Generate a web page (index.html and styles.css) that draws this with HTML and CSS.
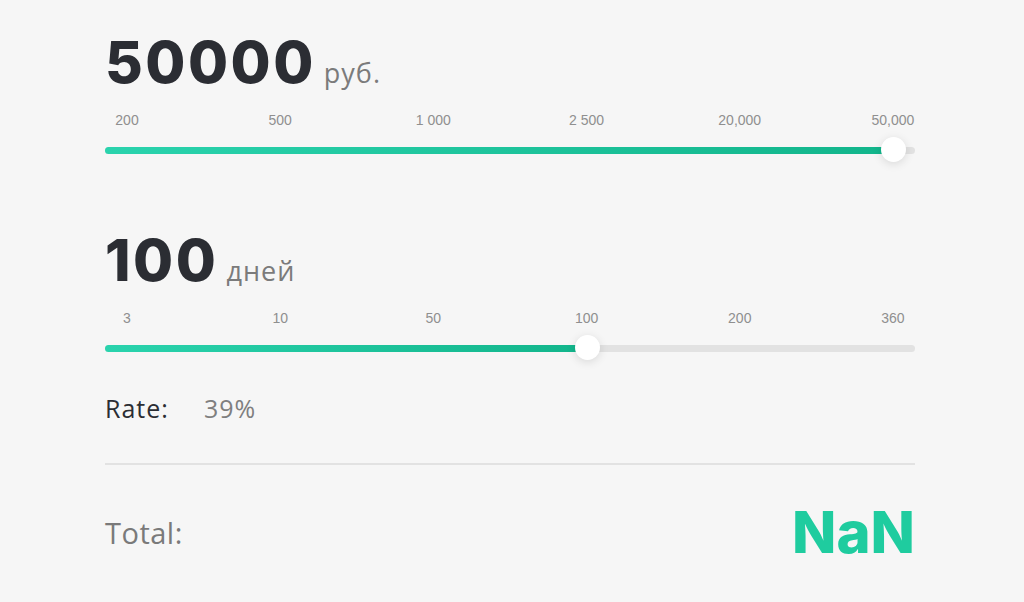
FILE: index.html
```html
<!DOCTYPE html>
<html lang="ru">
<head>
  <meta charset="UTF-8">
  <meta name="viewport" content="width=device-width, initial-scale=1.0">
  <title>Calculator</title>
  <link rel="stylesheet" href="styles.css">
</head>
<body>
  <div class="calc">
    <div class="field">
      <div class="value"><span class="num">50000</span> <span class="unit">руб.</span></div>
      <div class="ticks">
        <span>200</span><span>500</span><span>1 000</span><span>2 500</span><span>20,000</span><span>50,000</span>
      </div>
      <div class="slider">
        <div class="track">
          <div class="fill" style="width: 97.3%;"></div>
        </div>
        <div class="thumb" style="left: 97.3%;"></div>
      </div>
    </div>

    <div class="field second">
      <div class="value"><span class="num">100</span> <span class="unit">дней</span></div>
      <div class="ticks">
        <span>3</span><span>10</span><span>50</span><span>100</span><span>200</span><span>360</span>
      </div>
      <div class="slider">
        <div class="track">
          <div class="fill" style="width: 59.5%;"></div>
        </div>
        <div class="thumb" style="left: 59.5%;"></div>
      </div>
    </div>

    <div class="rate">
      <span class="rate-label">Rate:</span>
      <span class="rate-value">39%</span>
    </div>

    <div class="total">
      <span class="total-label">Total:</span>
      <span class="total-value">NaN</span>
    </div>
  </div>
</body>
</html>
```

FILE: styles.css
```css
body {
  margin: 0;
  background-color: #f6f6f6;
  font-family: "Open Sans", "Lato", sans-serif;
  color: #2b2d33;
}
.calc {
  width: 810px;
  margin: 0 0 0 105px;
  padding-top: 31px;
}
.value {
  display: flex;
  align-items: baseline;
  height: 62px;
}
.num {
  font-family: "Inter", "Lato", sans-serif;
  font-size: 58px;
  font-weight: 800;
  line-height: 62px;
  letter-spacing: 2.5px;
  color: #2b2d33;
}
.unit {
  margin-left: 8px;
  font-size: 27px;
  letter-spacing: 1px;
  color: #7b7b7b;
}
.ticks {
  display: flex;
  justify-content: space-between;
  margin-top: 19px;
  font-family: "Liberation Sans", Arial, sans-serif;
  font-size: 14px;
  color: #8f8f8f;
}
.ticks span {
  width: 44px;
  text-align: center;
}
.slider {
  position: relative;
  margin-top: 9px;
  height: 26px;
}
.track {
  position: absolute;
  left: 0;
  right: 0;
  top: 10px;
  height: 7px;
  border-radius: 4px;
  background-color: #e2e2e2;
}
.fill {
  height: 100%;
  border-radius: 4px;
  background: linear-gradient(to right, #2ad3ad, #12b58b);
}
.thumb {
  position: absolute;
  top: 0;
  width: 25px;
  height: 25px;
  margin-left: -12px;
  border-radius: 50%;
  background-color: #fff;
  box-shadow: 0 2px 10px rgba(0, 0, 0, 0.12);
}
.second {
  margin-top: 66px;
}
.rate {
  display: flex;
  align-items: baseline;
  margin-top: 30px;
  font-size: 25px;
  letter-spacing: 1px;
  padding-bottom: 38px;
  border-bottom: 2px solid #e2e2e2;
}
.rate-label {
  width: 99px;
  color: #2b2d33;
}
.rate-value {
  color: #7f7f7f;
}
.total {
  display: flex;
  justify-content: space-between;
  align-items: center;
  margin-top: 32px;
}
.total-label {
  font-size: 29px;
  letter-spacing: 0.5px;
  color: #7a7a7a;
}
.total-value {
  font-family: "Inter", "Lato", sans-serif;
  font-size: 58px;
  font-weight: 800;
  color: #1fcc9f;
}
```
